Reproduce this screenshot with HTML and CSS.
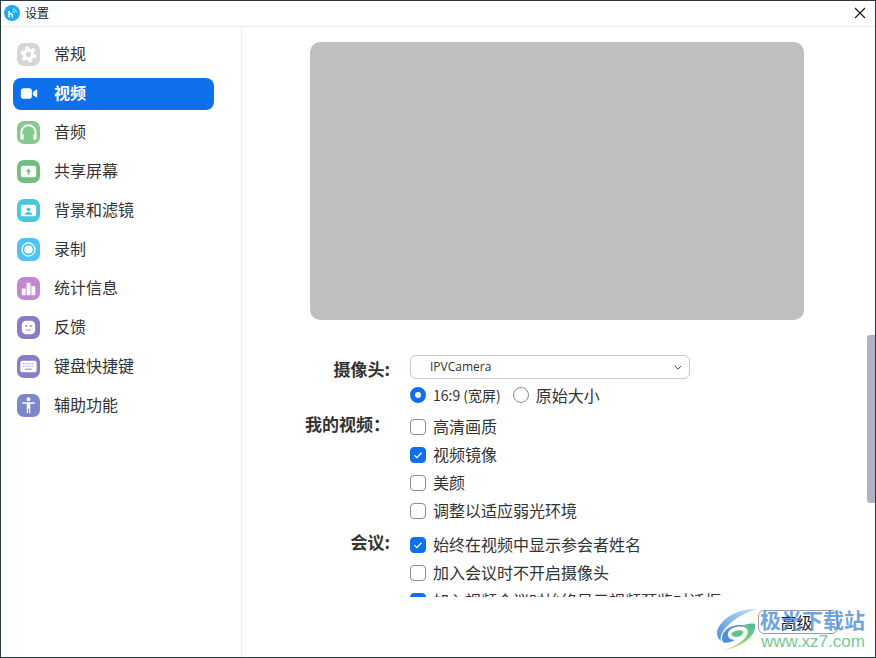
FILE: index.html
```html
<!DOCTYPE html>
<html lang="zh-CN">
<head>
    <meta charset="UTF-8">
    <title>设置</title>
    <link rel="stylesheet" href="styles.css">
</head>
<body>
    <div class="window">
        <div class="titlebar">
            <svg class="app-logo" viewBox="0 0 16 16">
                <circle cx="8" cy="8" r="8" fill="#1fa8f5"/>
                <path d="M5 12.500V6M5 9.600c1-1.300 3.300-1.200 3.300.6v2.300" fill="none" stroke="#fff" stroke-width="1.400"/>
                <path d="M8.500 6.200a2.200 2.200 0 0 1 1.800 1.800M9 3.800a4.500 4.500 0 0 1 3.500 3.500" fill="none" stroke="#fff" stroke-width="1"/>
            </svg>
            <span class="title">设置</span>
            <svg class="close" viewBox="0 0 12 12"><path d="M1 1l10 10M11 1L1 11" stroke="#111" stroke-width="1.100"/></svg>
        </div>
        <div class="main">
            <nav class="sidebar">
                <a class="navitem"><span class="icon gray">
                    <svg viewBox="0 0 24 24"><circle cx="12" cy="12" r="7" fill="none" stroke="#fff" stroke-width="2.500" stroke-dasharray="3.700 3.630"/><circle cx="12" cy="12" r="6.200" fill="#fff"/><circle cx="12" cy="12" r="2.800" fill="#d6d6d6"/></svg>
                </span><span class="name">常规</span></a>
                <a class="navitem active"><span class="icon">
                    <svg viewBox="0 0 24 24"><rect x="4" y="6.500" width="11.500" height="11" rx="3" fill="#fff"/><path fill="#fff" d="M16.500 10.500l4.500-3v9l-4.500-3z"/></svg>
                </span><span class="name">视频</span></a>
                <a class="navitem"><span class="icon green">
                    <svg viewBox="0 0 24 24"><path fill="none" stroke="#fff" stroke-width="2" d="M4.500 15v-3a7.500 7.500 0 0 1 15 0v3"/><rect x="3.500" y="13.500" width="3.500" height="6" rx="1.500" fill="#fff"/><rect x="17" y="13.500" width="3.500" height="6" rx="1.500" fill="#fff"/></svg>
                </span><span class="name">音频</span></a>
                <a class="navitem"><span class="icon share">
                    <svg viewBox="0 0 24 24"><rect x="4" y="6" width="16" height="12" rx="2" fill="#fff"/><path fill="#6fc07f" d="M12 9l3 3h-2v3h-2v-3H9z"/></svg>
                </span><span class="name">共享屏幕</span></a>
                <a class="navitem"><span class="icon cyan">
                    <svg viewBox="0 0 24 24"><rect x="4" y="6" width="16" height="12" rx="2" fill="#fff"/><circle cx="12" cy="10.800" r="2" fill="#45c8dd"/><path fill="#45c8dd" d="M8 16.500c0-4 8-4 8 0z"/></svg>
                </span><span class="name">背景和滤镜</span></a>
                <a class="navitem"><span class="icon blue">
                    <svg viewBox="0 0 24 24"><circle cx="12" cy="12" r="6.800" fill="none" stroke="#fff" stroke-width="1.300"/><circle cx="12" cy="12" r="4.300" fill="#fff"/></svg>
                </span><span class="name">录制</span></a>
                <a class="navitem"><span class="icon pink">
                    <svg viewBox="0 0 24 24"><rect x="5" y="12" width="4" height="7" fill="#fff"/><rect x="10" y="6" width="4" height="13" fill="#fff"/><rect x="15" y="9.500" width="4" height="9.500" fill="#fff"/></svg>
                </span><span class="name">统计信息</span></a>
                <a class="navitem"><span class="icon purple">
                    <svg viewBox="0 0 24 24"><rect x="5" y="5" width="14" height="14" rx="4.500" fill="#fff"/><circle cx="9.500" cy="10.500" r="1" fill="#8d79c9"/><circle cx="14.500" cy="10.500" r="1" fill="#8d79c9"/><path d="M9.500 14c1.200 1.200 3.800 1.200 5 0" fill="none" stroke="#8d79c9"/></svg>
                </span><span class="name">反馈</span></a>
                <a class="navitem"><span class="icon violet">
                    <svg viewBox="0 0 24 24"><rect x="3.500" y="6" width="17" height="12" rx="2" fill="#fff"/><path stroke="#8a7cc8" stroke-dasharray="1 1" d="M6 9h12M6 11.500h12"/><path stroke="#8a7cc8" d="M8.500 14.800h7"/></svg>
                </span><span class="name">键盘快捷键</span></a>
                <a class="navitem"><span class="icon indigo">
                    <svg viewBox="0 0 24 24"><circle cx="12" cy="5.500" r="2" fill="#fff"/><path fill="#fff" d="M5.500 8.500h13v1.700h-4.700V20h-1.300v-5h-1v5h-1.300v-9.800H5.500z"/></svg>
                </span><span class="name">辅助功能</span></a>
            </nav>
            <div class="content">
                <div class="panel">
                    <div class="scroller">
                        <div class="preview"></div>
                        <div class="row camera-row">
                            <div class="label">摄像头:</div>
                            <div class="select">
                                <span>IPVCamera</span>
                                <svg viewBox="0 0 10 6"><path d="M1 1l4 4 4-4" fill="none" stroke="#444" stroke-width="1.200"/></svg>
                            </div>
                        </div>
                        <div class="row radio-row">
                            <div class="label"></div>
                            <div class="radio on"></div><span class="ratio">16:9 (宽屏)</span>
                            <div class="radio"></div><span>原始大小</span>
                        </div>
                        <div class="row group">
                            <div class="label">我的视频：</div>
                            <div class="options">
                                <div class="option"><span class="box"></span><span class="text">高清画质</span></div>
                                <div class="option"><span class="box on"><svg viewBox="0 0 16 16"><path d="M4 8.300l2.800 2.700L12 5.500" fill="none" stroke="#fff" stroke-width="1.500"/></svg></span><span class="text">视频镜像</span></div>
                                <div class="option"><span class="box"></span><span class="text">美颜</span></div>
                                <div class="option"><span class="box"></span><span class="text">调整以适应弱光环境</span></div>
                            </div>
                        </div>
                        <div class="row group meeting">
                            <div class="label">会议:</div>
                            <div class="options">
                                <div class="option"><span class="box on"><svg viewBox="0 0 16 16"><path d="M4 8.300l2.800 2.700L12 5.500" fill="none" stroke="#fff" stroke-width="1.500"/></svg></span><span class="text">始终在视频中显示参会者姓名</span></div>
                                <div class="option"><span class="box"></span><span class="text">加入会议时不开启摄像头</span></div>
                                <div class="option"><span class="box on"><svg viewBox="0 0 16 16"><path d="M4 8.300l2.800 2.700L12 5.500" fill="none" stroke="#fff" stroke-width="1.500"/></svg></span><span class="text">加入视频会议时始终显示视频预览对话框</span></div>
                            </div>
                        </div>
                    </div>
                    <div class="scrollbar"><div class="thumb"></div></div>
                </div>
                <div class="footer">
                    <button class="advanced">高级</button>
                </div>
            </div>
        </div>
    </div>

    <!-- site watermark -->
    <div class="watermark">
        <svg class="wm-logo" viewBox="0 0 44 44">
            <defs>
                <linearGradient id="wmSweep" x1="0" y1="1" x2="1" y2="0">
                    <stop offset="0" stop-color="#e8e85a"/>
                    <stop offset="0.6" stop-color="#74cf7c"/>
                    <stop offset="1" stop-color="#4fb8a0"/>
                </linearGradient>
                <linearGradient id="wmArc" x1="0" y1="1" x2="1" y2="0">
                    <stop offset="0" stop-color="#4f8fd6"/>
                    <stop offset="1" stop-color="#bfe6f7"/>
                </linearGradient>
            </defs>
            <path fill="url(#wmArc)" d="M41 2C26 1 9 8 2 21c-2 5-1 10 3 13C2 24 20 8 41 2z"/>
            <path fill="#4f8fd6" d="M7 35c-4-8 5-17 17-17 4 0 7 1 8 3-8-3-18-1-20 5-1 4 2 7 7 7-4 2-9 4-12 2z"/>
            <path fill="url(#wmSweep)" d="M39 17c2 11-11 22-32 27 15-6 24-12 25-19 0-3-3-5-7-6 5-2 10-3 14-2z"/>
            <path fill="#62c08c" d="M15 27c2-3 8-5 12-3 1 3-3 6-7 6-2 0-4-1-5-3z"/>
        </svg>
        <div class="wm-text">
            <div class="wm-name">极光下载站</div>
            <div class="wm-url">www.xz7.com</div>
        </div>
    </div>
</body>
</html>
```

FILE: styles.css
```css
* {
    margin: 0;
    padding: 0;
    box-sizing: border-box;
}

html, body {
    width: 876px;
    height: 658px;
    overflow: hidden;
}

body {
    background-color: #2a3a40;
    font-family: "Noto Sans CJK SC", "Noto Sans", sans-serif;
    color: #333;
    padding: 1px;
    position: relative;
}

.window {
    background-color: #fff;
    height: 100%;
    display: flex;
    flex-direction: column;
}

.titlebar {
    height: 26px;
    flex: none;
    display: flex;
    align-items: center;
    padding-left: 3px;
    padding-bottom: 2px;
    border-bottom: 1px solid #ededf4;
}

.app-logo {
    width: 16px;
    height: 16px;
    margin-right: 5px;
}

.title {
    font-size: 12px;
    color: #222;
}

.close {
    width: 12px;
    height: 12px;
    margin-left: auto;
    margin-right: 9px;
}

.main {
    flex: 1;
    display: flex;
    min-height: 0;
}

.sidebar {
    width: 241px;
    flex: none;
    border-right: 1px solid #ededf4;
    padding: 12px 27px 0 12px;
}

.navitem {
    height: 32px;
    margin-bottom: 7px;
    display: flex;
    align-items: center;
    padding-left: 4px;
    padding-bottom: 1px;
    border-radius: 8px;
    font-size: 16px;
    color: #333;
}

.name {
    line-height: 20px;
    margin-bottom: 3px;
}

.navitem.active {
    background-color: #0e71eb;
    color: #fff;
    font-weight: bold;
}

.icon {
    width: 23px;
    height: 23px;
    border-radius: 7px;
    margin-right: 14px;
    flex: none;
    display: block;
}

.icon svg {
    width: 100%;
    height: 100%;
    display: block;
}

.gray { background-color: #d6d6d6; }
.green { background-color: #85c98b; }
.share { background-color: #6fc07f; }
.cyan { background-color: #45c8dd; }
.blue { background-color: #4fc3f7; }
.pink { background-color: #c287d3; }
.purple { background-color: #8d79c9; }
.violet { background-color: #8a7cc8; }
.indigo { background-color: #7d88cc; }

.content {
    flex: 1;
    display: flex;
    flex-direction: column;
    min-width: 0;
}

.panel {
    height: 570px;
    flex: none;
    display: flex;
    overflow: hidden;
}

.scroller {
    flex: 1;
    overflow: hidden;
    padding-top: 15px;
}

.preview {
    width: 494px;
    height: 278px;
    margin-left: 68px;
    margin-bottom: 35px;
    background-color: #c0c0c0;
    border-radius: 10px;
}

.row {
    display: flex;
    font-size: 16px;
    line-height: 24px;
}

.label {
    width: 148px;
    margin-right: 20px;
    padding-top: 2px;
    flex: none;
    text-align: right;
    font-size: 17px;
    font-weight: bold;
    color: #333;
}

.group .label {
    padding-top: 0;
    line-height: 22px;
}

.camera-row {
    height: 24px;
}

.select {
    width: 280px;
    height: 24px;
    border: 1px solid #c9c6d6;
    border-radius: 6px;
    display: flex;
    align-items: center;
    justify-content: space-between;
    padding: 0 7px 0 19px;
    font-family: "Open Sans", sans-serif;
    font-size: 12px;
    color: #333;
}

.select svg {
    width: 8px;
    height: 5px;
}

.radio-row {
    height: 34px;
    padding-bottom: 2px;
    align-items: center;
}

.radio-row span {
    margin-bottom: 1px;
}

.radio {
    width: 16px;
    height: 16px;
    border: 1px solid #8c8c8c;
    border-radius: 50%;
    margin-right: 7px;
    flex: none;
}

.radio.on {
    border: 5px solid #0e71eb;
}

.ratio {
    font-size: 14px;
    margin-right: 12px;
}

.options {
    display: flex;
    flex-direction: column;
}

.option {
    height: 28px;
    display: flex;
    align-items: center;
    white-space: nowrap;
}

.text {
    margin-bottom: 2px;
}

.box {
    width: 16px;
    height: 16px;
    border: 1px solid #8c8c8c;
    border-radius: 4px;
    margin-right: 7px;
    flex: none;
}

.box.on {
    background-color: #0e71eb;
    border-color: #0e71eb;
}

.box svg {
    display: block;
    width: 14px;
    height: 14px;
}

.meeting {
    margin-top: 6px;
}

.scrollbar {
    width: 8px;
    flex: none;
    padding-top: 308px;
}

.thumb {
    height: 168px;
    background-color: #b3b2c0;
    border-radius: 3px 0 0 3px;
}

.footer {
    flex: 1;
    display: flex;
    justify-content: flex-end;
    padding: 13px 37px 0 0;
}

.advanced {
    width: 80px;
    height: 24px;
    background-color: #fff;
    border: 1px solid #9a9aa4;
    border-radius: 6px;
    font-family: inherit;
    font-size: 16px;
    line-height: 22px;
    padding-right: 3px;
    color: #222;
}

/* overlay, sits on top of the dialog */
.watermark {
    position: absolute;
    left: 716px;
    top: 607px;
    display: flex;
    pointer-events: none;
}

.wm-logo {
    width: 44px;
    height: 44px;
}

.wm-text {
    display: flex;
    flex-direction: column;
}

.wm-name {
    font-size: 21px;
    line-height: 25px;
    font-weight: bold;
    color: rgba(70, 140, 215, 0.8);
}

.wm-url {
    font-family: "Liberation Sans", sans-serif;
    font-size: 17px;
    line-height: 20px;
    color: #72cc92;
    margin-left: 1px;
}
```
